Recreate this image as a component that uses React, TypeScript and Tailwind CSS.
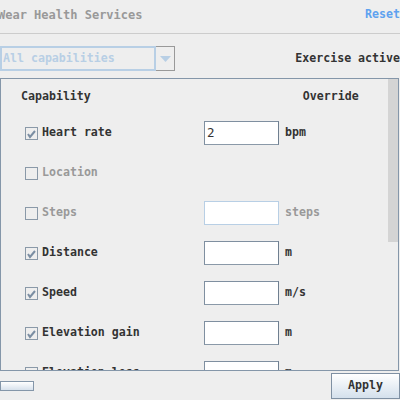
const mono = "font-['DejaVu_Sans_Mono',monospace] font-bold text-[11.6px]";

type Row = { name: string; on: boolean; enabled: boolean; unit?: string; value?: string };

const rows: Row[] = [
  { name: "Heart rate", on: true, enabled: true, unit: "bpm", value: "2" },
  { name: "Location", on: false, enabled: false },
  { name: "Steps", on: false, enabled: false, unit: "steps" },
  { name: "Distance", on: true, enabled: true, unit: "m" },
  { name: "Speed", on: true, enabled: true, unit: "m/s" },
  { name: "Elevation gain", on: true, enabled: true, unit: "m" },
  { name: "Elevation loss", on: true, enabled: true, unit: "m" },
];

function Check({ on }: { on: boolean }) {
  return (
    <div className="w-[13px] h-[13px] border border-[#8a99a8] bg-[#eeeeee] flex items-center justify-center">
      {on && (
        <svg width="11" height="11" viewBox="0 0 11 11">
          <path d="M2 6 L4 9 L9 3" stroke="#7b8ea3" strokeWidth="2" fill="none" />
        </svg>
      )}
    </div>
  );
}

function App() {
  return (
    <div className={`w-[400px] h-[400px] bg-[#eeeeee] overflow-hidden flex flex-col text-[#333333] ${mono}`}>
      <div className="h-[34px] flex items-center justify-between border-b border-[#cccccc] pb-[4px]">
        <span className="text-[#999999] -ml-[2px] text-[12px]">Wear Health Services</span>
        <span className="text-[#5ea2ef]">Reset</span>
      </div>
      <div className="mt-[12px] h-[25px] flex items-center">
        <div className="w-[156px] h-[25px] border-2 border-[#b8cfe5] flex items-center pl-[1px] text-[#b8cfe5] bg-[#eeeeee]">
          All capabilities
        </div>
        <div className="w-[19px] h-[25px] border border-[#999999] border-l-0 flex items-center justify-center">
          <svg width="11" height="6" viewBox="0 0 11 6">
            <path d="M0 0 H11 L5.5 6 Z" fill="#b8cfe5" />
          </svg>
        </div>
        <span className="ml-auto pl-[2px]">Exercise active</span>
      </div>
      <div className="mt-[7px] h-[293px] w-[399px] border border-[#8496a9] flex overflow-hidden">
        <div className="flex-1 flex flex-col overflow-hidden">
          <div className="h-[34px] shrink-0 flex items-center pt-[1px]">
            <span className="ml-[20px]">Capability</span>
            <span className="ml-[212px]">Override</span>
          </div>
          {rows.map((r) => (
            <div key={r.name} className="h-[40px] shrink-0 flex items-center">
              <div className="ml-[24px]"><Check on={r.on} /></div>
              <span className={`ml-[4px] w-[162px] ${r.enabled ? "text-[#333333]" : "text-[#999999]"}`}>{r.name}</span>
              {r.unit ? (
                <>
                  <div
                    className={`w-[75px] h-[24px] bg-white flex items-center pl-[2px] font-normal text-[12.5px] ${
                      r.enabled ? "border border-[#7f8fa0] border-r-[#6f7f90] border-b-[#8a99a8]" : "border border-[#b8cfe5]"
                    }`}
                  >
                    {r.value}
                  </div>
                  <span className={`ml-[6px] ${r.enabled ? "text-[#333333]" : "text-[#999999]"}`}>{r.unit}</span>
                </>
              ) : null}
            </div>
          ))}
        </div>
        <div className="w-[10px] shrink-0 flex flex-col">
          <div className="h-[163px] bg-[#d4d4d4]" />
        </div>
      </div>
      <div className="flex-1 flex items-start justify-between">
        <div className="mt-[10px] w-[34px] h-[10px] border border-[#8496a9] bg-gradient-to-b from-white to-[#d7e1ec]" />
        <div className="mt-[2px] w-[69px] h-[26px] border border-[#7f90a3] bg-gradient-to-b from-white to-[#d4e0ec] flex items-center justify-center">
          Apply
        </div>
      </div>
    </div>
  );
}

export default App;
